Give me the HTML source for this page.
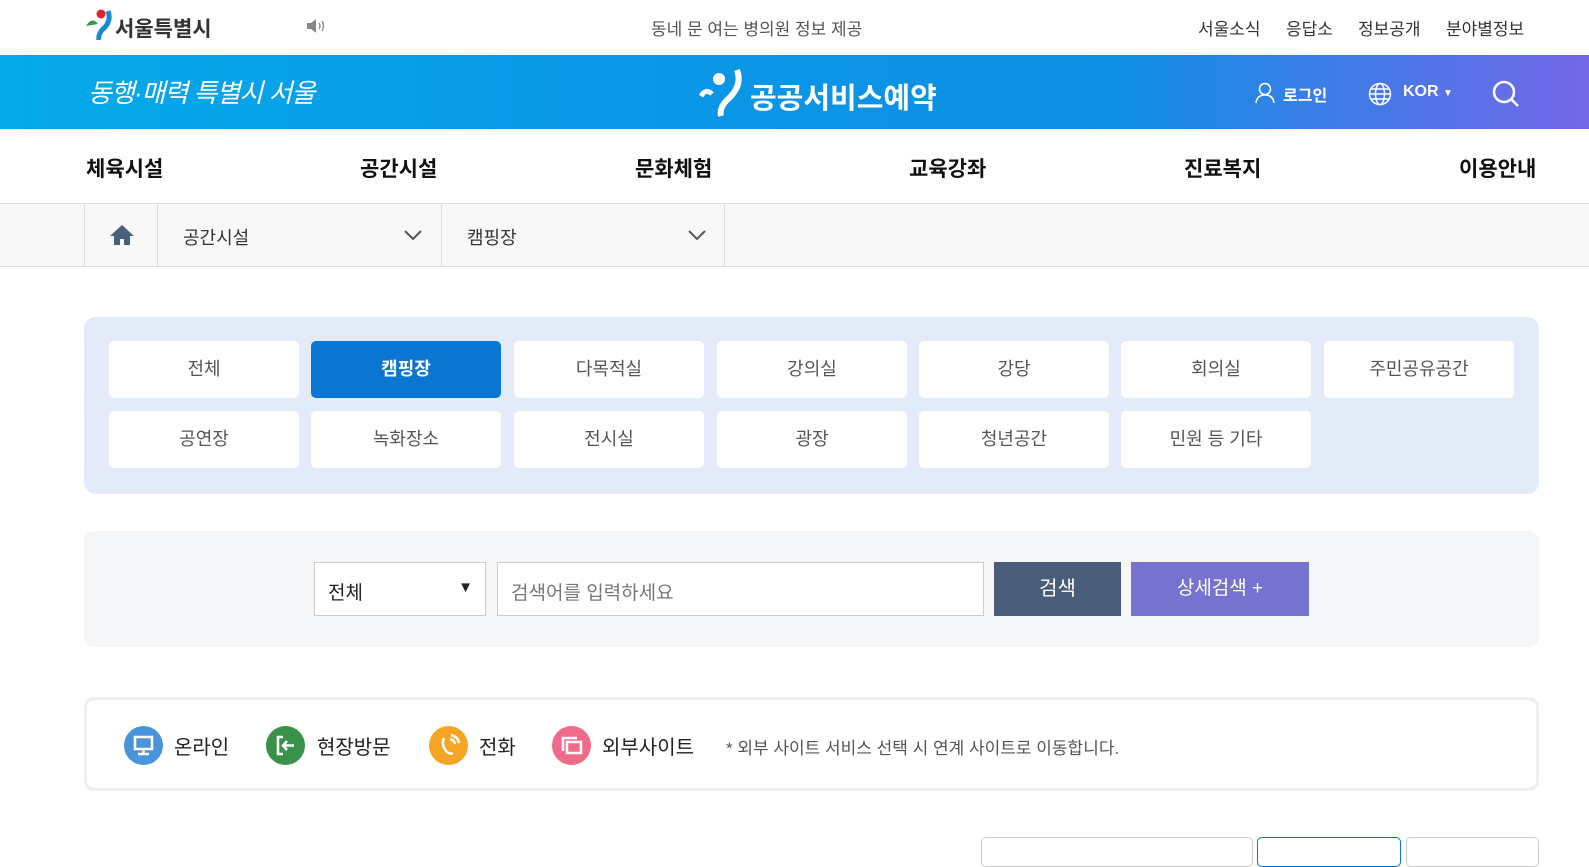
<!DOCTYPE html>
<html><head><meta charset="utf-8"><style>
*{box-sizing:border-box;margin:0;padding:0}
body{width:1589px;height:856px;overflow:hidden;background:#fff;font-family:"Liberation Sans","Noto Sans CJK KR",sans-serif;color:#222;position:relative}
.a{position:absolute}
.top{height:55px}
.band{top:55px;left:0;width:1589px;height:74px;background:linear-gradient(90deg,#05aaea 0%,#0a97e6 40%,#0d8fe4 70%,#7467e8 100%)}
.nav{top:129px;height:75px;width:1589px;border-bottom:1px solid #ddd}
.nav span{position:absolute;top:24px;font-size:21px;font-weight:bold;color:#111}
.bc{top:204px;height:63px;width:1589px;background:#f8f8f8;border-bottom:1px solid #ddd}
.cat{left:84px;top:317px;width:1455px;height:177px;background:#e3ebf8;border-radius:12px}
.b{position:absolute;width:190px;height:57px;background:#fff;border-radius:5px;text-align:center;line-height:57px;font-size:18px;color:#555}
.ic{position:absolute;top:726px;width:39px;height:39px;border-radius:50%}
.lg{position:absolute;top:731px;font-size:20px;color:#222}
.tl{position:absolute;top:15px;font-size:17px;color:#333}
</style></head><body>
<div class="a top" style="left:0;top:0;width:1589px">
 <svg class="a" style="left:84px;top:8px" width="30" height="32"><circle cx="17" cy="6" r="4.5" fill="#e1262d"/><path d="M2 18 Q8 8 14 16" fill="#2f9a3f"/><path d="M24 3 Q28 14 18 22 Q14 27 15 32" stroke="#1a8bd3" stroke-width="5" fill="none"/></svg>
 <div class="a" style="left:115px;top:13px;font-size:21px;font-weight:bold;color:#333">서울특별시</div>
 <svg class="a" style="left:306px;top:18px" width="22" height="16"><path d="M1 5H5L10 1V15L5 11H1Z" fill="#888"/><path d="M13 5Q15 8 13 11M16 3Q19 8 16 13" stroke="#888" stroke-width="1.3" fill="none"/></svg>
 <div class="a" style="left:651px;top:15px;font-size:17px;color:#555">동네 문 여는 병의원 정보 제공</div>
 <div class="tl" style="left:1198px">서울소식</div>
 <div class="tl" style="left:1286px">응답소</div>
 <div class="tl" style="left:1358px">정보공개</div>
 <div class="tl" style="left:1446px">분야별정보</div>
</div>
<div class="a band">
 <div class="a" style="left:88px;top:18px;font-size:26px;color:#fff;font-style:italic;letter-spacing:-1px">동행·매력 특별시 서울</div>
 <svg class="a" style="left:699px;top:13px" width="46" height="50"><circle cx="20" cy="11" r="6" fill="#fff"/><path d="M2 28 Q7 20 13 26" stroke="#fff" stroke-width="5" fill="none"/><path d="M38 2 Q44 18 28 32 Q20 40 22 48" stroke="#fff" stroke-width="6" fill="none"/></svg>
 <div class="a" style="left:750px;top:20px;font-size:29px;color:#fff;font-weight:bold">공공서비스예약</div>
 <svg class="a" style="left:1254px;top:27px" width="22" height="22" fill="none" stroke="#fff" stroke-width="1.6"><circle cx="11" cy="7" r="5.5"/><path d="M2 21 Q3 13 11 13 Q19 13 20 21"/></svg>
 <div class="a" style="left:1283px;top:27px;font-size:16px;color:#fff;font-weight:bold">로그인</div>
 <svg class="a" style="left:1368px;top:27px" width="24" height="24" fill="none" stroke="#fff" stroke-width="1.5"><circle cx="12" cy="12" r="10.5"/><ellipse cx="12" cy="12" rx="4.5" ry="10.5"/><path d="M1.5 12H22.5M3 7H21M3 17H21"/></svg>
 <div class="a" style="left:1403px;top:28px;font-size:16px;color:#fff;font-weight:bold">KOR <span style="font-size:10px">▼</span></div>
 <svg class="a" style="left:1492px;top:25px" width="28" height="28" fill="none" stroke="#fff" stroke-width="2.5"><circle cx="12" cy="12" r="10"/><path d="M19 19L26 26"/></svg>
</div>
<div class="a nav" style="left:0">
 <span style="left:86px">체육시설</span><span style="left:360px">공간시설</span><span style="left:635px">문화체험</span><span style="left:909px">교육강좌</span><span style="left:1184px">진료복지</span><span style="left:1459px">이용안내</span>
</div>
<div class="a bc" style="left:0">
 <div class="a" style="left:84px;top:0;width:74px;height:63px;border-left:1px solid #ddd;border-right:1px solid #ddd"><svg class="a" style="left:24px;top:20px" width="26" height="22"><path d="M13 1L1 12H5V21H11V15H15V21H21V12H25Z" fill="#4a5f7d"/></svg></div>
 <div class="a" style="left:183px;top:20px;font-size:18px;color:#333">공간시설</div>
 <svg class="a" style="left:403px;top:25px" width="20" height="12" fill="none" stroke="#555" stroke-width="2"><path d="M2 2L10 10L18 2"/></svg>
 <div class="a" style="left:441px;top:0;width:284px;height:63px;border-left:1px solid #ddd;border-right:1px solid #ddd"></div>
 <div class="a" style="left:467px;top:20px;font-size:18px;color:#333">캠핑장</div>
 <svg class="a" style="left:687px;top:25px" width="20" height="12" fill="none" stroke="#555" stroke-width="2"><path d="M2 2L10 10L18 2"/></svg>
</div>
<div class="a cat">
 <div class="b" style="left:25px;top:24px">전체</div>
 <div class="b" style="left:227px;top:24px;background:#0b76d1;color:#fff;font-weight:bold">캠핑장</div>
 <div class="b" style="left:430px;top:24px">다목적실</div>
 <div class="b" style="left:633px;top:24px">강의실</div>
 <div class="b" style="left:835px;top:24px">강당</div>
 <div class="b" style="left:1037px;top:24px">회의실</div>
 <div class="b" style="left:1240px;top:24px">주민공유공간</div>
 <div class="b" style="left:25px;top:94px">공연장</div>
 <div class="b" style="left:227px;top:94px">녹화장소</div>
 <div class="b" style="left:430px;top:94px">전시실</div>
 <div class="b" style="left:633px;top:94px">광장</div>
 <div class="b" style="left:835px;top:94px">청년공간</div>
 <div class="b" style="left:1037px;top:94px">민원 등 기타</div>
</div>
<div class="a" style="left:84px;top:531px;width:1455px;height:116px;background:#f5f6f8;border-radius:10px"></div>
<div class="a" style="left:314px;top:562px;width:172px;height:54px;background:#fff;border:1px solid #ccc;font-size:19px;padding:15px 0 0 13px;color:#222">전체<span class="a" style="right:12px;top:16px;font-size:15px">▼</span></div>
<div class="a" style="left:497px;top:562px;width:487px;height:54px;background:#fff;border:1px solid #ccc;font-size:19px;padding:15px 0 0 13px;color:#777">검색어를 입력하세요</div>
<div class="a" style="left:994px;top:562px;width:127px;height:54px;background:#4a5d78;color:#fff;font-size:20px;text-align:center;line-height:54px">검색</div>
<div class="a" style="left:1131px;top:562px;width:178px;height:54px;background:#7672cf;color:#fff;font-size:19px;text-align:center;line-height:54px">상세검색 +</div>
<div class="a" style="left:84px;top:697px;width:1455px;height:94px;border:3px solid #eceff3;border-radius:10px"></div>
<div class="ic" style="left:124px;background:#4a94dc"><svg width="39" height="39" fill="none" stroke="#fff" stroke-width="2.5"><rect x="11" y="11" width="17" height="12"/><path d="M19.5 23V28M14 28H25"/></svg></div>
<div class="lg" style="left:174px">온라인</div>
<div class="ic" style="left:266px;background:#3a9149"><svg width="39" height="39" fill="none" stroke="#fff" stroke-width="2.5"><path d="M17 11H12V28H17"/><path d="M28 19.5H17M21 15L17 19.5L21 24"/></svg></div>
<div class="lg" style="left:317px">현장방문</div>
<div class="ic" style="left:429px;background:#f5a524"><svg width="39" height="39" fill="none" stroke="#fff" stroke-width="2.5"><path d="M15 12Q12 18 17 25Q21 29 24 27"/><path d="M21 13Q25 14 26 18M22 9Q29 11 30 17"/></svg></div>
<div class="lg" style="left:479px">전화</div>
<div class="ic" style="left:552px;background:#f06a8a"><svg width="39" height="39" fill="none" stroke="#fff" stroke-width="2.5"><path d="M11 25V12H25"/><rect x="15" y="16" width="14" height="11"/></svg></div>
<div class="lg" style="left:602px">외부사이트</div>
<div class="a" style="left:726px;top:734px;font-size:17px;color:#555">* 외부 사이트 서비스 선택 시 연계 사이트로 이동합니다.</div>
<div class="a" style="left:981px;top:837px;width:272px;height:30px;border:1px solid #ccc;border-radius:5px"></div>
<div class="a" style="left:1257px;top:837px;width:144px;height:30px;border:1px solid #0b76d1;border-radius:5px"></div>
<div class="a" style="left:1406px;top:837px;width:133px;height:30px;border:1px solid #ccc;border-radius:5px"></div>
</body></html>
